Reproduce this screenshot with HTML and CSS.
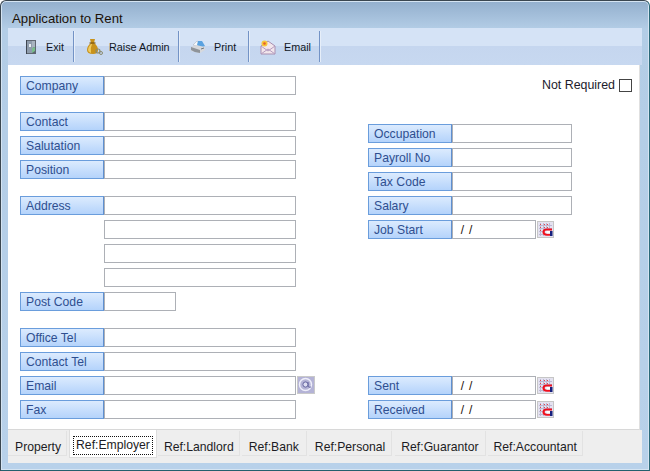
FILE: index.html
```html
<!DOCTYPE html>
<html lang="en">
<head>
<meta charset="utf-8">
<title>Application to Rent</title>
<link rel="stylesheet" href="styles.css">
</head>
<body>
<svg class="defs" width="0" height="0" aria-hidden="true">
  <symbol id="cal" viewBox="0 0 17 17">
    <rect x="0" y="0" width="17" height="17" fill="#c6c6c6"/>
    <rect x="1" y="1" width="15" height="15" fill="#e4e2f0"/>
    <path d="M3.500 2v13M6.500 2v13M9.500 2v5M12.500 2v5M2 4.500h13M2 7.500h13M2 10.500h5M2 13.500h5" stroke="#bdb8d4" stroke-width="1"/>
    <path d="M3 3.500h1M7 3.500h1M10 3.500h1M3 6.500h1M7 6.500h1M10 6.500h1M3 9.500h1" stroke="#e2474f" stroke-width="1"/>
    <path d="M15 8.500H10Q6.500 8.500 6.500 11T10 13.800H13" fill="none" stroke="#ee0f1d" stroke-width="2.100"/>
    <rect x="13" y="10" width="2.500" height="5" fill="#16207c"/>
    <rect x="9.500" y="10" width="3.500" height="2.500" fill="#fff"/>
  </symbol>
</svg>
<main class="window">
  <header class="titlebar">Application to Rent</header>
  <nav class="toolbar">
    <button class="tool tool-exit" type="button">
      <svg class="tool-icon" width="16" height="18" viewBox="0 0 16 18"><rect x="2" y="2" width="10" height="14" fill="#5f6772"/><rect x="3" y="3" width="5" height="12" fill="#8f9cac"/><path d="M8 3h3v6l-3 1z" fill="#a8b4c0"/><path d="M8 10l3-1v4l-3 2z" fill="#79bd8c"/><rect x="5" y="6" width="2" height="3" fill="#e8eef2"/><path d="M2 2h1v14H2z" fill="#3f4650"/></svg>
      <span class="tool-text">Exit</span>
    </button>
    <button class="tool tool-admin" type="button">
      <svg class="tool-icon" width="18" height="18" viewBox="0 0 18 18"><path d="M5 1h5l-1 4q4 3 4 7 0 4-5 4-6 0-6-4 0-4 4-7z" fill="#c8921c"/><path d="M6 6q-3 3-3 6 0 2 3 3-1-5 1-9z" fill="#f0cc60"/><path d="M4.500 5h6" stroke="#7a5510" stroke-width="1.200"/><circle cx="13" cy="13" r="2" fill="none" stroke="#8a8a70" stroke-width="1.200"/><circle cx="16" cy="15" r="1.500" fill="none" stroke="#8a8a70"/></svg>
      <span class="tool-text">Raise Admin</span>
    </button>
    <button class="tool tool-print" type="button">
      <svg class="tool-icon" width="16" height="16" viewBox="0 0 16 16"><path d="M3 6l4-4 3 2-3 3z" fill="#f6f8fb" stroke="#aeb6c0" stroke-width="0.600"/><path d="M8 2l4 0 3 5-5 2-3-3z" fill="#5aa2e0"/><path d="M1 8l5-2 9 2v3l-5 3-9-2z" fill="#d6d8dc"/><path d="M1 8v3q4 3 9 3v-3z" fill="#8f949a"/><path d="M11 10l3-1" stroke="#70767c"/></svg>
      <span class="tool-text">Print</span>
    </button>
    <button class="tool tool-email" type="button">
      <svg class="tool-icon" width="16" height="16" viewBox="0 0 16 16"><path d="M1 7l7-5 7 5v8H1z" fill="#f2e6ec" stroke="#a98fb0"/><path d="M1 15l7-5 7 5M1 7l7 5 7-5" fill="none" stroke="#b59cc0"/><circle cx="4.500" cy="4.500" r="3" fill="#f6c63a"/><circle cx="4.500" cy="4.500" r="1.300" fill="#e8602c"/></svg>
      <span class="tool-text">Email</span>
    </button>
  </nav>
  <section class="sheet">
    <div class="column-left">
      <div class="row"><label class="tag">Company</label><span class="field wide"></span></div>
      <div class="row gap"><label class="tag">Contact</label><span class="field wide"></span></div>
      <div class="row"><label class="tag">Salutation</label><span class="field wide"></span></div>
      <div class="row"><label class="tag">Position</label><span class="field wide"></span></div>
      <div class="row gap"><label class="tag">Address</label><span class="field wide"></span></div>
      <div class="row indent"><span class="field wide"></span></div>
      <div class="row indent"><span class="field wide"></span></div>
      <div class="row indent"><span class="field wide"></span></div>
      <div class="row"><label class="tag">Post Code</label><span class="field short"></span></div>
      <div class="row gap"><label class="tag">Office Tel</label><span class="field wide"></span></div>
      <div class="row"><label class="tag">Contact Tel</label><span class="field wide"></span></div>
      <div class="row"><label class="tag">Email</label><span class="field wide"></span>
        <svg class="at-btn" width="18" height="18" viewBox="0 0 18 18"><rect width="18" height="18" fill="#c9c9c9"/><rect x="1" y="1" width="16" height="16" fill="#b4b3d6"/><circle cx="8.500" cy="8.500" r="6" fill="none" stroke="#eeeefa" stroke-width="1.500"/><circle cx="8.500" cy="8.500" r="2.600" fill="#dcdcf0" stroke="#6565a0" stroke-width="1"/><path d="M11.100 6v4q0 2 3 1" fill="none" stroke="#6565a0" stroke-width="0.900"/></svg>
      </div>
      <div class="row"><label class="tag">Fax</label><span class="field wide"></span></div>
    </div>
    <div class="column-right">
      <div class="not-required"><span>Not Required</span><span class="check"></span></div>
      <div class="row gap-double"><label class="tag">Occupation</label><span class="field mid"></span></div>
      <div class="row"><label class="tag">Payroll No</label><span class="field mid"></span></div>
      <div class="row"><label class="tag">Tax Code</label><span class="field mid"></span></div>
      <div class="row"><label class="tag">Salary</label><span class="field mid"></span></div>
      <div class="row"><label class="tag">Job Start</label><span class="field date"> / /</span><svg class="cal" width="17" height="17"><use href="#cal"/></svg></div>
      <div class="row gap-large"><label class="tag">Sent</label><span class="field date"> / /</span><svg class="cal" width="17" height="17"><use href="#cal"/></svg></div>
      <div class="row"><label class="tag">Received</label><span class="field date"> / /</span><svg class="cal" width="17" height="17"><use href="#cal"/></svg></div>
    </div>
  </section>
  <footer class="tabs">
    <span class="tab tab-first">Property</span>
    <span class="tab active"><span class="focus">Ref:Employer</span></span>
    <span class="tab">Ref:Landlord</span>
    <span class="tab tab-bank">Ref:Bank</span>
    <span class="tab tab-personal">Ref:Personal</span>
    <span class="tab tab-guarantor">Ref:Guarantor</span>
    <span class="tab">Ref:Accountant</span>
  </footer>
</main>
</body>
</html>
```
FILE: styles.css
```css
* { box-sizing: border-box; }
html, body { margin: 0; padding: 0; }
body { width: 650px; height: 471px; overflow: hidden; background: #fff; font-family: "Liberation Sans", Arial, sans-serif; font-size: 12px; }
.defs { position: absolute; }
.window {
  width: 650px; height: 471px; display: flex; flex-direction: column;
  border: 1px solid #3a4650; border-bottom-color: #23606e; border-right-color: #2b6a7a;
  border-radius: 6px 6px 0 0;
  background: linear-gradient(#93afcd 0, #b3cde6 28px, #b8d1ea 100%);
  box-shadow: inset 0 0 0 1px #d5e4f2;
}
.titlebar { height: 27px; padding: 11px 0 0 11px; font-size: 13.2px; line-height: 14px; color: #1c1208; flex: none; }
.toolbar {
  flex: none; height: 37px; margin: 0 7px; display: flex; align-items: center;
  background: linear-gradient(#d5e3f6 0, #d5e3f6 50%, #c5d6ef 50%, #c7d8f0 100%);
}
.tool {
  height: 31px; display: flex; align-items: center; padding: 0; margin: 0; border: 0;
  border-right: 1px solid #7393c6; box-shadow: 1px 0 0 #e6eef9;
  background: none; font: inherit; font-size: 10.8px; color: #10161e;
}
.tool-exit { width: 66px; padding-left: 16px; }
.tool-exit .tool-text { margin-left: 6px; }
.tool-admin { width: 105px; padding-left: 11px; }
.tool-admin .tool-text { margin-left: 6px; }
.tool-print { width: 70px; padding-left: 11px; }
.tool-print .tool-text { margin-left: 8px; }
.tool-email { width: 71px; padding-left: 11px; }
.tool-email .tool-text { margin-left: 8px; }
.sheet { flex: 1; margin: 0 9px 0 7px; background: #fff; display: flex; padding: 11px 0 0 12px; border-right: 1px solid #e0e0e0; border-bottom: 1px solid #d8d8d8; min-height: 0; }
.column-left { width: 348px; flex: none; }
.column-right { flex: 1; position: relative; }
.row { height: 24px; display: flex; align-items: flex-start; }
.gap { margin-top: 12px; }
.gap-double { margin-top: 24px; }
.gap-large { margin-top: 132px; }
.indent { padding-left: 84px; }
.tag {
  width: 84px; height: 19px; line-height: 19px; padding-left: 5px; color: #2f4f90; font-size: 12.2px;
  border: 1px solid #6a9ddc; border-right-color: #5e8fd0;
  background: linear-gradient(#dcebfe, #b4d3fb); flex: none;
}
.field { height: 19px; border: 1px solid #adb0b6; background: #fff; flex: none; line-height: 18px; white-space: pre; color: #1c1208; }
.wide { width: 192px; }
.short { width: 72px; }
.mid { width: 120px; }
.date { width: 84px; padding-left: 3px; word-spacing: 1.500px; }
.cal { margin: 1px 0 0 1px; flex: none; }
.at-btn { margin: 0 0 0 1px; flex: none; }
.not-required { height: 24px; display: flex; align-items: flex-start; justify-content: flex-end; padding-right: 7px; color: #1c1c2c; line-height: 19px; font-size: 12.4px; }
.check { width: 13px; height: 13px; border: 1px solid #444; margin: 3px 0 0 4px; background: #fff; }
.tabs { flex: none; height: 33px; margin: 0 7px 7px; background: #eee; display: flex; align-items: flex-start; font-size: 12.2px; }
.tab {
  height: 25px; margin-top: 1px; padding: 8px 5px 0 6px; display: flex; align-items: center; margin-right: 2px;
  border-right: 1px solid #e2e2e2; border-bottom: 1px solid #e2e2e2; color: #1c1c24; background: #eee;
}
.tab-first { padding-left: 7px; padding-right: 5px; }
.tab-bank { padding-left: 7px; padding-right: 7px; }
.tab-personal { padding-right: 6px; margin-right: 3px; }
.tab-guarantor { padding-right: 6px; }
.active { margin-top: 0; height: 28px; background: #fff; border: 1px solid #ddd; border-top: 0; padding: 6px 3px 0; margin-right: 1px; align-items: flex-start; }
.focus { border: 1px dotted #111; padding: 0 2px; line-height: 16px; height: 19px; }
```
